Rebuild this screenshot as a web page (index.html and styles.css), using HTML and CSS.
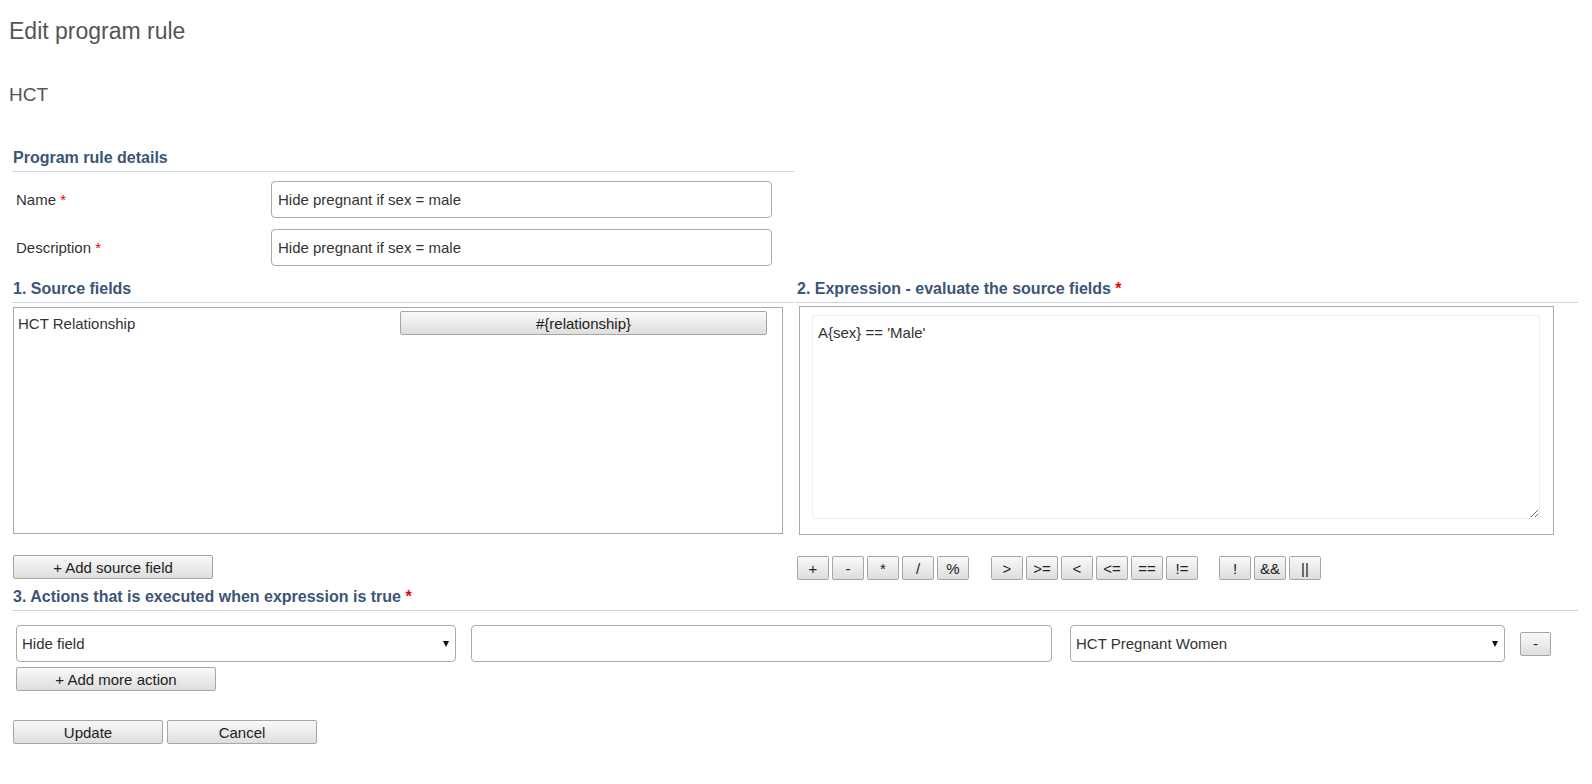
FILE: index.html
```html
<!DOCTYPE html>
<html>
<head>
<meta charset="utf-8">
<title>Edit program rule</title>
<link rel="stylesheet" href="styles.css">
</head>
<body>
<div class="page">
  <h1 class="title">Edit program rule</h1>
  <h2 class="subtitle">HCT</h2>

  <div class="details">
    <div class="section-head">Program rule details</div>
    <div class="form-rows">
      <div class="form-row">
        <label class="form-label">Name <span class="req">*</span></label>
        <input class="text-input" type="text" value="Hide pregnant if sex = male">
      </div>
      <div class="form-row">
        <label class="form-label">Description <span class="req">*</span></label>
        <input class="text-input" type="text" value="Hide pregnant if sex = male">
      </div>
    </div>
  </div>

  <div class="columns">
    <div class="col">
      <div class="section-head">1. Source fields</div>
      <div class="source-box">
        <div class="source-row">
          <span class="source-name">HCT Relationship</span>
          <button class="btn btn-var">#{relationship}</button>
        </div>
      </div>
      <div class="under-row">
        <button class="btn btn-add">+ Add source field</button>
      </div>
    </div>
    <div class="col">
      <div class="section-head">2. Expression - evaluate the source fields <span class="req">*</span></div>
      <div class="expr-box">
        <textarea class="expr-area">A{sex} == 'Male'</textarea>
      </div>
      <div class="under-row ops">
        <div class="op-group">
          <button class="btn op">+</button>
          <button class="btn op">-</button>
          <button class="btn op">*</button>
          <button class="btn op">/</button>
          <button class="btn op">%</button>
        </div>
        <div class="op-group">
          <button class="btn op">&gt;</button>
          <button class="btn op">&gt;=</button>
          <button class="btn op">&lt;</button>
          <button class="btn op">&lt;=</button>
          <button class="btn op">==</button>
          <button class="btn op">!=</button>
        </div>
        <div class="op-group">
          <button class="btn op">!</button>
          <button class="btn op">&amp;&amp;</button>
          <button class="btn op">||</button>
        </div>
      </div>
    </div>
  </div>

  <div class="actions">
    <div class="section-head">3. Actions that is executed when expression is true <span class="req">*</span></div>
    <div class="action-row">
      <div class="select-wrap sel-action">
        <select class="select"><option>Hide field</option></select>
      </div>
      <input class="text-input act-input" type="text" value="">
      <div class="select-wrap sel-field">
        <select class="select"><option>HCT Pregnant Women</option></select>
      </div>
      <button class="btn btn-remove">-</button>
    </div>
    <button class="btn btn-more">+ Add more action</button>
  </div>

  <div class="footer">
    <button class="btn btn-foot">Update</button>
    <button class="btn btn-foot">Cancel</button>
  </div>
</div>
</body>
</html>
```
FILE: styles.css
```css
* { box-sizing: border-box; }

body {
  margin: 0;
  background: #fff;
  font-family: "Liberation Sans", Arial, sans-serif;
  font-size: 15px;
  color: #333;
}

.page {
  padding: 18px 14px 0 12px;
}

.title {
  margin: 0 0 0 -3px;
  font-size: 23px;
  line-height: 26px;
  font-weight: normal;
  color: #555;
}

.subtitle {
  margin: 40px 0 0 -3px;
  font-size: 19px;
  line-height: 22px;
  font-weight: normal;
  color: #555;
}

.section-head {
  font-size: 16px;
  line-height: 19px;
  font-weight: bold;
  color: #3c5576;
  padding: 0 0 4px 1px;
  border-bottom: 1px solid #cbd6e2;
}

.req {
  color: #e00;
  font-weight: normal;
}

.section-head .req {
  font-weight: bold;
}

.details {
  width: 782px;
  margin-top: 42px;
}

.form-rows {
  display: flex;
  flex-direction: column;
  gap: 11px;
  padding-top: 9px;
}

.form-row {
  display: flex;
  align-items: center;
}

.form-label {
  width: 259px;
  padding-left: 4px;
  color: #333;
}

.text-input {
  width: 501px;
  height: 37px;
  border: 1px solid #aaa;
  border-radius: 4px;
  padding: 0 6px;
  font-family: "Liberation Sans", Arial, sans-serif;
  font-size: 15px;
  color: #333;
  background: #fff;
  outline: none;
}

.columns {
  display: grid;
  grid-template-columns: 782px 782px;
  column-gap: 2px;
  margin-top: 13px;
}

.col {
  display: flex;
  flex-direction: column;
}

.source-box {
  margin: 4px 0 0 1px;
  width: 770px;
  height: 227px;
  border: 1px solid #aaa;
  padding: 3px 15px 3px 3px;
}

.source-row {
  display: flex;
  align-items: center;
  justify-content: space-between;
}

.source-name {
  padding-left: 1px;
}

.expr-box {
  margin: 3px 0 0 3px;
  width: 755px;
  height: 229px;
  border: 1px solid #aaa;
  padding: 8px 13px 0 12px;
}

.expr-area {
  display: block;
  width: 728px;
  height: 204px;
  border: 1px solid #eee;
  border-radius: 2px;
  padding: 8px 5px;
  margin: 0;
  font-family: "Liberation Sans", Arial, sans-serif;
  font-size: 15px;
  line-height: 18px;
  color: #333;
  background: #fff;
  outline: none;
}

.under-row {
  display: flex;
  margin-top: 21px;
}

.ops {
  margin-left: 1px;
  gap: 22px;
}

.op-group {
  display: flex;
  gap: 3px;
}

.ops .op-group:last-child {
  margin-left: -1px;
}

.btn {
  height: 24px;
  border: 1px solid #a6a6a6;
  border-radius: 2px;
  background: linear-gradient(#f9f9f9, #dedede);
  font-family: "Liberation Sans", Arial, sans-serif;
  font-size: 15px;
  color: #222;
  padding: 0;
  margin: 0;
  cursor: pointer;
}

.btn-var {
  width: 367px;
}

.btn-add {
  margin-left: 1px;
  width: 200px;
}

.op {
  width: 32px;
}

.actions {
  margin-top: 7px;
}

.action-row {
  display: flex;
  align-items: center;
  margin-top: 14px;
  padding-left: 4px;
}

.select-wrap {
  position: relative;
  height: 37px;
}

.select-wrap::after {
  content: "";
  position: absolute;
  right: 7px;
  top: 16px;
  border-left: 3px solid transparent;
  border-right: 3px solid transparent;
  border-top: 6px solid #111;
  pointer-events: none;
}

.sel-action { width: 440px; }

.sel-field {
  width: 435px;
  margin-left: 18px;
}

.select {
  -webkit-appearance: none;
  appearance: none;
  width: 100%;
  height: 37px;
  border: 1px solid #aaa;
  border-radius: 4px;
  padding: 0 20px 0 5px;
  font-family: "Liberation Sans", Arial, sans-serif;
  font-size: 15px;
  color: #333;
  background: #fff;
  outline: none;
}

.act-input {
  width: 581px;
  margin-left: 15px;
}

.btn-remove {
  width: 31px;
  margin-left: 15px;
}

.btn-more {
  display: block;
  margin: 5px 0 0 4px;
  width: 200px;
}

.footer {
  display: flex;
  gap: 4px;
  margin: 29px 0 0 1px;
}

.btn-foot {
  width: 150px;
}
```
